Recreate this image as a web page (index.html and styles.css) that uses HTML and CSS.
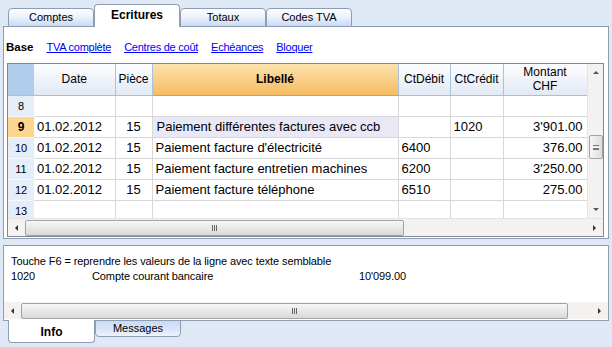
FILE: index.html
```html
<!DOCTYPE html>
<html lang="fr">
<head>
<meta charset="utf-8">
<title>Ecritures</title>
<link rel="stylesheet" href="styles.css">
</head>
<body>
<div class="tabs-top">
  <div class="tab">Comptes</div>
  <div class="tab active">Ecritures</div>
  <div class="tab">Totaux</div>
  <div class="tab">Codes TVA</div>
</div>
<div class="panel">
  <div class="subnav">
    <span class="cur">Base</span>
    <a>TVA complète</a>
    <a>Centres de coût</a>
    <a>Echéances</a>
    <a>Bloquer</a>
  </div>
  <div class="grid">
    <div class="grid-main">
      <div class="table-area">
        <table>
          <colgroup>
            <col class="c-num"><col class="c-date"><col class="c-doc"><col class="c-desc"><col class="c-deb"><col class="c-cre"><col class="c-amt">
          </colgroup>
          <thead>
            <tr>
              <th class="hnum"></th>
              <th>Date</th>
              <th>Pièce</th>
              <th class="hsel">Libellé</th>
              <th>CtDébit</th>
              <th>CtCrédit</th>
              <th>Montant<br>CHF</th>
            </tr>
          </thead>
          <tbody>
            <tr><td class="num">8</td><td></td><td></td><td></td><td></td><td></td><td></td></tr>
            <tr><td class="num sel">9</td><td>01.02.2012</td><td class="ctr">15</td><td class="cur-cell">Paiement différentes factures avec ccb</td><td></td><td>1020</td><td class="r">3'901.00</td></tr>
            <tr><td class="num">10</td><td>01.02.2012</td><td class="ctr">15</td><td>Paiement facture d'électricité</td><td>6400</td><td></td><td class="r">376.00</td></tr>
            <tr><td class="num">11</td><td>01.02.2012</td><td class="ctr">15</td><td>Paiement facture entretien machines</td><td>6200</td><td></td><td class="r">3'250.00</td></tr>
            <tr><td class="num">12</td><td>01.02.2012</td><td class="ctr">15</td><td>Paiement facture téléphone</td><td>6510</td><td></td><td class="r">275.00</td></tr>
            <tr><td class="num">13</td><td></td><td></td><td></td><td></td><td></td><td></td></tr>
          </tbody>
        </table>
      </div>
      <div class="vscroll">
        <div class="sb-btn"><span class="ar up"></span></div>
        <div class="vtrack"><div class="vthumb"><span class="grip-h"></span></div></div>
        <div class="sb-btn"><span class="ar down"></span></div>
      </div>
    </div>
    <div class="hscroll">
      <div class="sb-btn h"><span class="ar left"></span></div>
      <div class="htrack"><div class="hthumb grid-thumb"><span class="grip-v"></span></div></div>
      <div class="sb-btn h"><span class="ar right"></span></div>
    </div>
  </div>
</div>
<div class="info">
  <div class="info-text">
    <div class="line">Touche F6 = reprendre les valeurs de la ligne avec texte semblable</div>
    <div class="line acct"><span class="a1">1020</span><span class="a2">Compte courant bancaire</span><span class="a3">10'099.00</span></div>
  </div>
  <div class="hscroll info-scroll">
    <div class="sb-btn h"><span class="ar left"></span></div>
    <div class="htrack"><div class="hthumb info-thumb"><span class="grip-v"></span></div></div>
    <div class="sb-btn h"><span class="ar right"></span></div>
  </div>
</div>
<div class="tabs-bottom">
  <div class="btab active">Info</div>
  <div class="btab">Messages</div>
</div>
</body>
</html>
```
FILE: styles.css
```css
* { box-sizing: border-box; }
html, body { margin: 0; padding: 0; }
body {
  width: 612px;
  height: 347px;
  overflow: hidden;
  background: #dfe8f5;
  font-family: "Liberation Sans", Arial, sans-serif;
  color: #000;
}

/* top tabs */
.tabs-top {
  display: flex;
  align-items: flex-end;
  height: 27px;
  margin-bottom: -1px;
  padding-left: 8px;
  position: relative;
  z-index: 2;
}
.tab {
  width: 86px;
  height: 19px;
  border: 1px solid #8f9db3;
  border-radius: 4px 4px 0 0;
  background: linear-gradient(#fdfeff, #eef3fc 45%, #c9d9f5);
  font-size: 11px;
  line-height: 17px;
  text-align: center;
}
.tab.active {
  height: 23px;
  border-bottom: none;
  background: #fff;
  font-weight: bold;
  font-size: 12px;
  line-height: 21px;
}

/* main panel */
.panel {
  margin: 0 3px;
  height: 213px;
  border: 1px solid #8f9db3;
  background: #fff;
  display: flex;
  flex-direction: column;
}
.subnav {
  height: 36px;
  display: flex;
  align-items: center;
  gap: 13px;
  padding: 4px 0 0 2px;
  font-size: 11px;
  letter-spacing: -0.25px;
}
.subnav .cur { font-weight: bold; font-size: 11.5px; letter-spacing: 0; }
.subnav a { color: #0000ff; text-decoration: underline; }

.grid {
  margin-left: 3px;
  width: 597px;
  height: 174px;
  border: 1px solid #828790;
  display: flex;
  flex-direction: column;
}
.grid-main {
  display: flex;
  height: 154px;
}
.table-area {
  width: 579px;
  height: 154px;
  overflow: hidden;
}
table {
  border-collapse: collapse;
  table-layout: fixed;
  width: 579px;
}
.c-num { width: 26px; }
.c-date { width: 81px; }
.c-doc { width: 37px; }
.c-desc { width: 246px; }
.c-deb { width: 52px; }
.c-cre { width: 53px; }
.c-amt { width: 84px; }

th {
  height: 31px;
  padding: 0;
  font-size: 12px;
  font-weight: normal;
  line-height: 14px;
  background: linear-gradient(#fcfdff, #e2e9f3);
  border-right: 1px solid #a9c2dc;
  border-bottom: 1px solid #a9bfd8;
  text-align: center;
}
th.hnum { background: #b2cdec; border-right: none; }
th.hsel {
  background: linear-gradient(#fbe2ab, #f6bb63);
  border-bottom: 1px solid #ee9a35;
  font-weight: bold;
}
td {
  height: 21px;
  padding: 0 3px;
  font-size: 13px;
  white-space: nowrap;
  overflow: hidden;
  border-right: 1px solid #d8d8d8;
  border-bottom: 1px solid #d8d8d8;
}
td.num {
  background: #e4edf8;
  text-align: center;
  font-size: 11px;
  padding: 0;
  border-right: none;
  border-bottom: 1px solid #f4f8fc;
}
td.num.sel { background: #fcd58f; font-weight: bold; font-size: 12px; }
td.cur-cell { background: #e8e8f6; padding-left: 4px; }
td.ctr { text-align: center; }
td.r { text-align: right; padding-right: 4px; }

/* scrollbars */
.vscroll {
  width: 16px;
  display: flex;
  flex-direction: column;
  background: #f4f1f1;
  border-left: 1px solid #e6e3e3;
}
.sb-btn {
  height: 17px;
  display: flex;
  align-items: center;
  justify-content: center;
  flex: none;
}
.sb-btn.h { width: 17px; height: auto; }
.vtrack { flex: 1; }
.vthumb {
  margin: 54px 0 0 1px;
  width: 14px;
  height: 24px;
  border: 1px solid #a3a3a3;
  border-radius: 2px;
  background: linear-gradient(90deg, #f6f6f6, #dcdcdc);
  display: flex;
  align-items: center;
  justify-content: center;
}
.grip-h {
  width: 6px;
  height: 5px;
  border-top: 1px solid #777;
  border-bottom: 1px solid #777;
  background: linear-gradient(#fff 0 1px, #777 1px 2px, transparent 2px);
  background-size: 6px 2px;
  background-position: 0 1px;
  background-repeat: no-repeat;
}
.ar { width: 0; height: 0; display: block; }
.ar.up { border-left: 3px solid transparent; border-right: 3px solid transparent; border-bottom: 3px solid #555; }
.ar.down { border-left: 3px solid transparent; border-right: 3px solid transparent; border-top: 3px solid #555; }
.ar.left { border-top: 3px solid transparent; border-bottom: 3px solid transparent; border-right: 3px solid #333; }
.ar.right { border-top: 3px solid transparent; border-bottom: 3px solid transparent; border-left: 3px solid #333; }

.hscroll {
  height: 18px;
  display: flex;
  background: #f4f1f1;
  border-top: 1px solid #e6e3e3;
}
.htrack { flex: 1; display: flex; align-items: center; }
.hthumb {
  height: 16px;
  border: 1px solid #a3a3a3;
  border-radius: 2px;
  background: linear-gradient(#f7f7f7, #d9d9d9);
  display: flex;
  align-items: center;
  justify-content: center;
}
.grid-thumb { width: 379px; }
.info-thumb { width: 547px; }
.grip-v {
  width: 5px;
  height: 6px;
  border-left: 1px solid #666;
  border-right: 1px solid #666;
  background: linear-gradient(90deg, transparent 1px, #666 1px 2px, transparent 2px);
}

/* info panel */
.info {
  margin: 6px 3px 0;
  height: 76px;
  border: 1px solid #8f9db3;
  background: #fff;
  display: flex;
  flex-direction: column;
  justify-content: space-between;
}
.info-text {
  padding: 8px 0 0 7px;
  font-size: 11px;
  line-height: 15px;
  letter-spacing: -0.1px;
}
.acct { display: flex; }
.a1 { width: 81px; }
.a2 { width: 267px; }
.info-scroll { border-top: none; height: 17px; margin-bottom: 1px; }

/* bottom tabs */
.tabs-bottom {
  display: flex;
  align-items: flex-start;
  padding-left: 8px;
  margin-top: -1px;
  position: relative;
  z-index: 2;
}
.btab {
  width: 86px;
  height: 17px;
  border: 1px solid #8f9db3;
  border-radius: 0 0 4px 4px;
  background: linear-gradient(#c9daf7, #dbe6f9 60%, #eef3fc);
  font-size: 11px;
  line-height: 14px;
  text-align: center;
}
.btab.active {
  width: 87px;
  height: 23px;
  border-top: none;
  background: #fff;
  font-weight: bold;
  font-size: 12px;
  line-height: 24px;
}
```
